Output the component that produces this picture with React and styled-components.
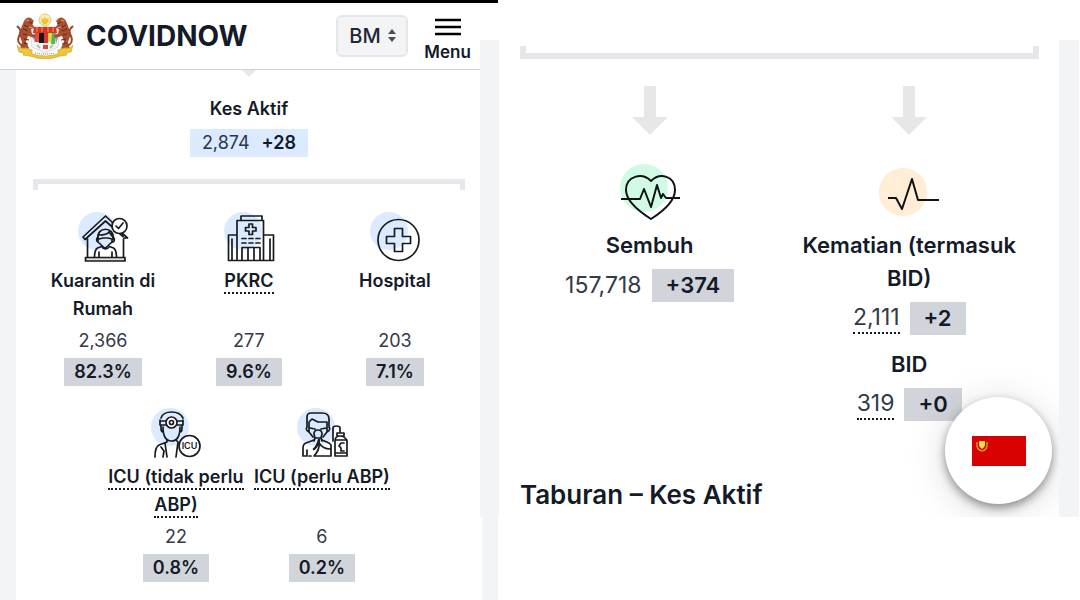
import styled, { createGlobalStyle } from 'styled-components';

const GlobalStyle = createGlobalStyle`
  * {
    box-sizing: border-box;
  }
  body {
    margin: 0;
    background: #fff;
    color: #141a28;
    font-family: Inter, "Liberation Sans", sans-serif;
  }
  h1, h2, h3, p {
    margin: 0;
  }
`;

const Page = styled.div`
  display: flex;
  align-items: flex-start;
  min-height: 100vh;
`;

const Summary = styled.div`
  flex: 0 0 46.1%;
  align-self: stretch;
  display: flex;
  flex-direction: column;
  border-top: 3px solid #000;
  background: #f3f4f6;
`;

const Outcome = styled.section`
  flex: 1;
  min-width: 0;
  position: relative;
  margin: 40px 1px 0 -18px;
  padding: 6px 20px 4px 21px;
  border: solid #f3f4f6;
  border-width: 0 20px 0 19px;
  background: #fff;
  overflow: hidden;
`;

const Header = styled.header`
  display: flex;
  align-items: center;
  flex-shrink: 0;
  height: 67px;
  padding: 0 27px 0 15px;
  border-bottom: 1px solid #d1d2d5;
  background: #fff;
`;

const Brand = styled.h1`
  flex: 1;
  margin-left: 11px;
  font-size: 28px;
  line-height: 36px;
  font-weight: 700;
`;

const Language = styled.label`
  position: relative;
  display: block;
  svg {
    position: absolute;
    right: 11px;
    top: 13px;
    pointer-events: none;
  }
`;

const LanguageSelect = styled.select`
  appearance: none;
  display: block;
  width: 72px;
  height: 42px;
  padding: 0 11px;
  border: 2px solid #e5e7eb;
  border-radius: 6px;
  background: #f3f4f6;
  color: #1f2735;
  font: 500 20px Inter, sans-serif;
`;

const MenuButton = styled.button`
  display: flex;
  flex-direction: column;
  align-items: center;
  gap: 6px;
  margin-left: 16px;
  padding: 7px 0 0;
  border: 0;
  background: none;
  color: #141a28;
  font: 600 17px/20px Inter, sans-serif;
`;

const SummaryBody = styled.main`
  flex: 1;
  display: flex;
  flex-direction: column;
  align-items: center;
  margin: 0 16px;
  padding-bottom: 16px;
  background: #fff;
`;

const Caret = styled.div`
  border: solid transparent;
  border-width: 7px 7px 0;
  border-top-color: #e5e7eb;
  margin-bottom: 18px;
`;

const ActiveTitle = styled.h2`
  font-size: 18px;
  line-height: 28px;
  font-weight: 600;
`;

const ActiveCount = styled.p`
  display: flex;
  gap: 12px;
  margin-top: 6px;
  padding: 0 12px;
  background: #dbeafe;
  color: #2b3648;
  font-size: 18px;
  line-height: 28px;
  b {
    color: #141a28;
    font-weight: 600;
  }
`;

const BracketDown = styled.div`
  align-self: stretch;
  height: 11px;
  margin: 22px 17px 0;
  border: solid #e5e7eb;
  border-width: 5px 5px 0;
`;

const BracketUp = styled.div`
  height: 13px;
  border: solid #e5e7eb;
  border-width: 0 6px 6px;
`;

const Row = styled.div`
  display: flex;
  justify-content: center;
  align-self: stretch;
  margin: 22px 14px 0;
`;

const Stat = styled.div`
  flex: 0 0 33.333%;
  display: flex;
  flex-direction: column;
  align-items: center;
  text-align: center;
`;

const StatTitle = styled.h3`
  min-height: 56px;
  margin: 3px 0 4px;
  font-size: 18px;
  line-height: 28px;
  font-weight: 600;
`;

const Hint = styled.span`
  padding-bottom: 1px;
  border-bottom: 2px dotted #141a28;
`;

const StatValue = styled.p`
  color: #333b48;
  font-size: 18px;
  line-height: 28px;
`;

const Share = styled.p`
  margin-top: 3px;
  padding: 0 10px;
  background: #d1d5db;
  font-size: 18px;
  line-height: 28px;
  font-weight: 600;
`;

const Columns = styled.div`
  display: grid;
  grid-template-columns: 1fr 1fr;
  padding-top: 27px;
`;

const Result = styled.div`
  display: flex;
  flex-direction: column;
  align-items: center;
  text-align: center;
`;

const ResultIcon = styled.svg`
  margin: 28px 0 7px;
`;

const ResultTitle = styled.h3`
  font-size: 22px;
  line-height: 33px;
  font-weight: 600;
`;

const Count = styled.p`
  display: flex;
  align-items: center;
  gap: 10px;
  margin: 7px 0 13px;
  color: #333b48;
  font-size: 23px;
  line-height: 33px;
`;

const CountHint = styled.span`
  line-height: 29px;
  border-bottom: 2px dotted #141a28;
`;

const Delta = styled.b`
  padding: 0 14px;
  background: #d1d5db;
  color: #141a28;
  font-size: 22px;
  font-weight: 600;
`;

const SectionTitle = styled.h2`
  margin-top: 43px;
  font-size: 26px;
  line-height: 36px;
  font-weight: 600;
`;

const StateButton = styled.button`
  position: absolute;
  right: 7px;
  bottom: 13px;
  display: grid;
  place-items: center;
  width: 107px;
  height: 107px;
  padding: 0;
  border: 0;
  border-radius: 50%;
  background: #fff;
  box-shadow: 0 4px 10px rgba(0, 0, 0, 0.4), 0 6px 40px rgba(0, 0, 0, 0.15);
`;

const Tiger = () => (
  <>
    <path d="M9 8q3-5 7-3l3 3-2 3 3 4-4 1 1 5 4 1-1 3-7-2-2 6 3 6-2 3-7-2 2-7-3-8 3-8z" fill="#a94f30" />
    <path d="M8 33Q1 30 4 23q3-5 0-8l-2-2" stroke="#9a452c" strokeWidth="2" />
    <path d="M9 12l4 2m-5 2 5 2m-5 3 4 1m-3 4 5 1m-5 3 4 1m1-22 4 2" stroke="#542b25" />
    <path d="M11 8l3-1m0 7 4 1" stroke="#e6a16b" />
  </>
);

const Crest = () => (
  <svg width="60" height="46" viewBox="0 0 60 46" fill="none" aria-hidden="true">
    <circle cx="30" cy="7" r="6" fill="#fbf0bd" stroke="#e9cc62" />
    <path d="M30 3l1 3 3-1-1 3 2 1-3 1 0 2-2-1-2 1 0-2-3-1 2-1-1-3 3 1z" fill="#edc33e" />
    <path d="M17 14h26l2 6-2 14-13 6-13-6-2-14z" fill="#f6f5f2" stroke="#cfcdc8" strokeWidth=".7" />
    <path d="M19 14h22l1 6H18z" fill="#dc3029" />
    <path d="M22 14v5m5-5v5m6-5v5m5-5v5" stroke="#f0a12d" />
    <path d="M20 20h4v9h-4z" fill="#e94b3f" />
    <path d="M24 20h5v10h-5z" fill="#17181c" />
    <path d="M29 20h4v10h-4z" fill="#d8382c" />
    <path d="M33 20h4v9h-4z" fill="#f1d442" />
    <path d="M37 20h4l-1 11h-4z" fill="#54b557" />
    <path d="M17 23l3-3v10zM40 20l4 2-3 9z" fill="#8aa6c8" />
    <path d="M28 32h5v4h-5z" fill="#d84539" />
    <path d="M22 32l3 3m10 0 3-3" stroke="#a9c4ac" strokeWidth="2" />
    <Tiger />
    <g transform="translate(60 0) scale(-1 1)">
      <Tiger />
    </g>
    <path d="M2 32q2 4 9 3l6 2v4q13 4 26 0v-4l6-2q7 1 9-3l-2 7-5 1 1 2-7 1q-15 6-30 0l-7-1 1-2-5-1z" fill="#efc634" stroke="#cfa53a" strokeWidth=".7" />
    <path d="M20 40q10 2 20 0" stroke="#987833" strokeDasharray="1 1" />
  </svg>
);

const IconBox = ({ children }) => (
  <svg width="54" height="52" viewBox="0 0 54 52" fill="none" stroke="#171a1e" strokeWidth="1.7" strokeLinecap="round" strokeLinejoin="round" aria-hidden="true">
    <circle cx="21" cy="19" r="19" fill="#dbeafe" stroke="none" />
    {children}
  </svg>
);

const HomeIcon = () => (
  <IconBox>
    <path d="M11.500 27v18M47.500 27v18M7 25 29.500 4l7 6.500M7 25l2 2.500L29.500 9 47 24.500M46 21l5.500 5h-3.500" />
    <circle cx="43.500" cy="14" r="7.500" fill="#fff" />
    <path d="m40 14 2.500 2.500L47 11" />
    <path d="M9.500 45.500h39.500v3.500H9.500z" fill="#ddd" />
    <path d="M22 27c-2-13 17-13 15 0M23 23q8 0 10-3l3 4M22 27v3l7 6.500 7-6.500v-3M23 27l4-1h5l4 1M22 30q-2-1-1-4m16 4q2-1 1-4" />
    <path d="M18.500 45q0-7 3-9l4-1.500q4 5 8 0l4 1.500q3 2 3 9M23 40v5m13-5v5" />
  </IconBox>
);

const CenterIcon = () => (
  <IconBox>
    <path d="M15 48.500V8.500h26.500v40M19 8.500V4h21v4.500M6.500 23H15M6.500 23v25.500h45V23h-10M10 27v21m38-21v21" />
    <path d="M27 12h3.500v3.500H34V19h-3.500v3.500H27V19h-3.500v-3.500H27z" />
    <path d="M20 26.500h4m3 0h4m3 0h4m-18 4.500h4m3 0h4m3 0h4" />
    <path d="M20 48V35.500h18V48M26 36v12m6-12v12" />
  </IconBox>
);

const HospitalIcon = () => (
  <IconBox>
    <circle cx="30.500" cy="28" r="20.500" />
    <path d="M26.500 16.500h8v8h8v7h-8v8h-8v-8h-8v-7h8z" />
  </IconBox>
);

const DoctorIcon = () => (
  <IconBox>
    <path d="M12 10q2-6 10.500-6T34 10M12 13h5m11 0h6M11 12v5h6M28 17h6v-5M12 17v3q0 4 2 4m19-7v3q0 4-2 4M14 19q0 14 8.500 14T31 19" />
    <circle cx="22.500" cy="14.500" r="5.500" fill="#fff" />
    <circle cx="22.500" cy="14.500" r="2" />
    <path d="M18 32v2l-8 3q-4 2-4 12M16 35l2 14m-6-10 3 4-1 6M27 32l2 2-2 15" />
    <circle cx="40.500" cy="38" r="10.500" fill="#fff" />
    <text x="40.500" y="41" textAnchor="middle" fontFamily="Inter, sans-serif" fontSize="9" fontWeight="600" fill="#171a1e" stroke="none">ICU</text>
  </IconBox>
);

const VentilatorIcon = () => (
  <IconBox>
    <path d="M12 19V9q0-4 4-4h11q7 0 7 6v8M12 19q-2 3 2 5m20-5q2 3-2 5M14 18v-4l3-3 6 3h9v4M14 18v6l4 5m14-11v6l-4 5" />
    <path d="m15 20 5 1m11-1-5 1M19 26q0-4 4-4t4 4l-1 4h-6zM20 30l-1 3m7-3 1 3" />
    <path d="M19 32 11 35q-3 1-3 5v8h3m3 0h2M12 42v6M27 32l7 3 2 2v11H19q6-6 5-14M24 35q4 6 11 6" />
    <path d="M24 32q-2 7-5 9" strokeWidth="2.500" />
    <path d="M38 33V20q0-2 3.500-2t3.500 2v4M42 25h7v3h-7zM40 33q0-5 5-5t7 5v15H40zM40 32h12M40 45h12M49 35h-3l-2 3 2 2v3h3" />
  </IconBox>
);

const Arrow = () => (
  <svg width="36" height="50" viewBox="0 0 36 50" aria-hidden="true">
    <path d="M12 0h12v31h12L18 49 0 31h12z" fill="#e7e7e8" />
  </svg>
);

const HeartIcon = () => (
  <ResultIcon width="60" height="58" viewBox="0 0 60 58" fill="none" stroke="#101315" strokeWidth="2" strokeLinejoin="round" aria-hidden="true">
    <circle cx="24" cy="24" r="24" fill="#d1fae5" stroke="none" />
    <path d="M31 17C22 8 6 12 6 26c0 12 14 22 25 29 11-7 24-17 24-29C55 12 40 8 31 17z" />
    <path d="M1 35h19l4-10 7 18 6-22 4 13 2-4 3 4h14" />
  </ResultIcon>
);

const PulseIcon = () => (
  <ResultIcon width="60" height="58" viewBox="0 0 60 58" fill="none" stroke="#101315" strokeWidth="2" strokeLinejoin="round" aria-hidden="true">
    <circle cx="24" cy="28" r="24" fill="#ffedd5" stroke="none" />
    <path d="M9 34h8l6 11 10-30 6 21h21" />
  </ResultIcon>
);

const Flag = () => (
  <svg width="54" height="30" viewBox="0 0 54 30" fill="none" aria-hidden="true">
    <path d="M0 0h54v30H0z" fill="#d80000" />
    <path d="M7 5h6v4q0 2-3 4-3-2-3-4z" fill="#f5df4b" />
    <path d="M5 6q-1 8 5 9 6-1 5-9" stroke="#d8951e" strokeWidth="1.5" />
  </svg>
);

const places = [
  { icon: HomeIcon, title: 'Kuarantin di Rumah', value: '2,366', share: '82.3%' },
  { icon: CenterIcon, title: 'PKRC', hint: true, value: '277', share: '9.6%' },
  { icon: HospitalIcon, title: 'Hospital', value: '203', share: '7.1%' },
];

const icu = [
  { icon: DoctorIcon, title: 'ICU (tidak perlu ABP)', hint: true, value: '22', share: '0.8%' },
  { icon: VentilatorIcon, title: 'ICU (perlu ABP)', hint: true, value: '6', share: '0.2%' },
];

const StatRow = ({ items }) => (
  <Row>
    {items.map(({ icon: Icon, title, hint, value, share }) => (
      <Stat key={title}>
        <Icon />
        <StatTitle>{hint ? <Hint>{title}</Hint> : title}</StatTitle>
        <StatValue>{value}</StatValue>
        <Share>{share}</Share>
      </Stat>
    ))}
  </Row>
);

const App = () => {
  return (
    <>
      <GlobalStyle />
      <Page>
        <Summary>
          <Header>
            <Crest />
            <Brand>COVIDNOW</Brand>
            <Language>
              <LanguageSelect aria-label="Bahasa" defaultValue="BM">
                <option>BM</option>
              </LanguageSelect>
              <svg width="10" height="16" viewBox="0 0 10 16" fill="#4b5057" aria-hidden="true">
                <path d="M1 6l4-5 4 5zM1 9h8l-4 5z" />
              </svg>
            </Language>
            <MenuButton>
              <svg width="26" height="18" viewBox="0 0 26 18" stroke="#000" strokeWidth="2.500" aria-hidden="true">
                <path d="M0 2h26M0 9h26M0 16h26" />
              </svg>
              Menu
            </MenuButton>
          </Header>
          <SummaryBody>
            <Caret />
            <ActiveTitle>Kes Aktif</ActiveTitle>
            <ActiveCount>
              2,874 <b>+28</b>
            </ActiveCount>
            <BracketDown />
            <StatRow items={places} />
            <StatRow items={icu} />
          </SummaryBody>
        </Summary>

        <Outcome>
          <BracketUp />
          <Columns>
            <Result>
              <Arrow />
              <HeartIcon />
              <ResultTitle>Sembuh</ResultTitle>
              <Count>
                157,718 <Delta>+374</Delta>
              </Count>
            </Result>
            <Result>
              <Arrow />
              <PulseIcon />
              <ResultTitle>Kematian (termasuk BID)</ResultTitle>
              <Count>
                <CountHint>2,111</CountHint> <Delta>+2</Delta>
              </Count>
              <ResultTitle>BID</ResultTitle>
              <Count>
                <CountHint>319</CountHint> <Delta>+0</Delta>
              </Count>
            </Result>
          </Columns>
          <SectionTitle>Taburan – Kes Aktif</SectionTitle>
          <StateButton aria-label="Negeri">
            <Flag />
          </StateButton>
        </Outcome>
      </Page>
    </>
  );
};

export default App;
